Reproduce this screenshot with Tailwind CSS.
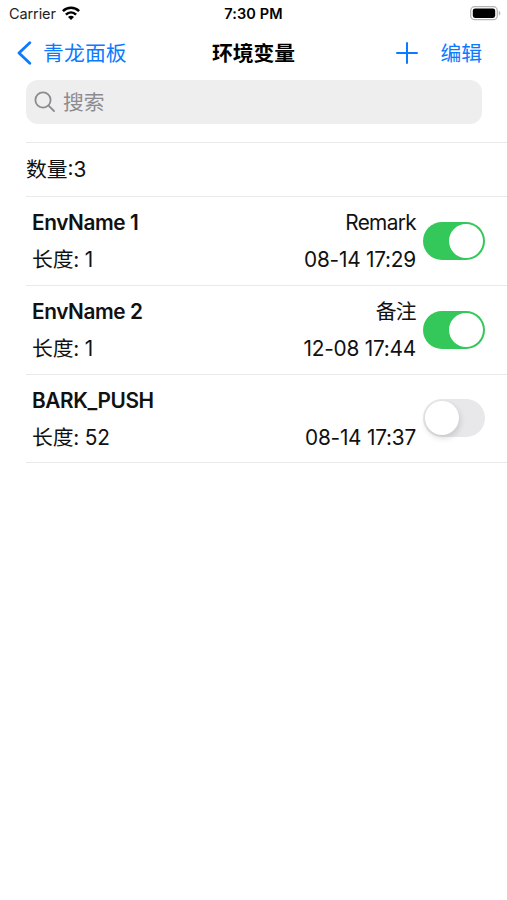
<!DOCTYPE html>
<html lang="zh-CN">
<head>
    <meta charset="UTF-8">
    <meta name="viewport" content="width=device-width, initial-scale=1.0">
    <title>环境变量</title>
    <script src="https://cdn.jsdelivr.net/npm/@tailwindcss/browser@4"></script>
</head>
<body class="bg-white text-[#111] font-['Inter','Noto_Sans_CJK_SC',sans-serif] text-[20.8px] overflow-hidden">
    <div class="w-[507px] h-[900px] flex flex-col">
        <!-- Status bar -->
        <div class="h-7 grid grid-cols-3 items-center pl-[9px] pr-[6px] text-[14.5px] leading-7">
            <div class="flex items-center gap-[6px] text-[#222]">
                <span class="tracking-[-0.1px]">Carrier</span>
                <svg class="w-[18px] h-[14px] -mt-[2px]" viewBox="0 0 18 14" fill="none" stroke="#000" stroke-width="2.5">
                    <path d="M0.9 5.2C5.4 0.7 12.6 0.7 17.1 5.2"/>
                    <path d="M3.9 8.7C6.9 5.7 11.1 5.7 14.1 8.7"/>
                    <path d="M6 11C7.8 9.2 10.2 9.2 12 11L9 14Z" fill="#000" stroke="none"/>
                </svg>
            </div>
            <div class="text-center font-semibold text-black tracking-[0.15px] pr-[3px]">7:30 PM</div>
            <div class="flex justify-end">
                <svg class="w-[31px] h-[15px] -mt-px" viewBox="0 0 31 15">
                    <rect x="0.7" y="0.7" width="26.6" height="13" rx="4" fill="#fff" stroke="#b4b4b4" stroke-width="1.3"/>
                    <rect x="2.8" y="2.5" width="22.4" height="9.4" rx="2.3"/>
                    <path d="M28.8 4.8C30.9 5.5 30.9 8.9 28.8 9.6Z" fill="#b4b4b4"/>
                </svg>
            </div>
        </div>

        <!-- Navigation bar -->
        <div class="h-[50px] grid grid-cols-3 items-center pl-[17px] pr-[25px] text-[#0a7aff] leading-[50px]">
            <div class="flex items-center gap-[11px]">
                <svg class="w-[15px] h-6 -mt-[2px]" viewBox="0 0 15 24" fill="none" stroke="currentColor" stroke-width="2.8" stroke-linecap="round" stroke-linejoin="round">
                    <path d="M12.8 1.7L2 12L12.8 22.3"/>
                </svg>
                <span class="pt-px tracking-[0.15px]">青龙面板</span>
            </div>
            <div class="text-center font-bold text-black pl-[8px] pt-px">环境变量</div>
            <div class="flex items-center justify-end gap-[22px]">
                <svg class="w-[22px] h-[22px] -mt-px" viewBox="0 0 22 22" fill="none" stroke="currentColor" stroke-width="2" stroke-linecap="round">
                    <path d="M11 1V21M1 11H21"/>
                </svg>
                <span class="pt-px">编辑</span>
            </div>
        </div>

        <!-- Search field -->
        <div class="mt-[2px] ml-[26px] w-[456px] h-11 rounded-[12px] bg-[#eeeeef] flex items-center pl-[8px] gap-[7px] text-[#8c8c90]">
            <svg class="w-[22px] h-[22px]" viewBox="0 0 22 22" fill="none" stroke="currentColor" stroke-width="1.8" stroke-linecap="round">
                <circle cx="9" cy="9" r="7.6"/>
                <path d="M14.6 14.6L20 20"/>
            </svg>
            <span class="pt-[2px]">搜索</span>
        </div>

        <!-- Variable list -->
        <div class="mt-[18px] ml-[26px] border-t border-[#e9e9ea]">
            <div class="h-[54px] border-b border-[#e9e9ea] flex items-center pt-px">数量:3</div>
            <div id="envList"></div>
        </div>
    </div>

    <script>
        const envs = [
            { name: 'EnvName 1', remark: 'Remark', length: 1, time: '08-14 17:29', enabled: true },
            { name: 'EnvName 2', remark: '备注', length: 1, time: '12-08 17:44', enabled: true },
            { name: 'BARK_PUSH', remark: '', length: 52, time: '08-14 17:37', enabled: false }
        ];

        function renderSwitch(enabled) {
            return enabled ? `
                <div class="w-[62px] h-[38px] rounded-full bg-[#34c759] p-[2px] flex justify-end">
                    <div class="w-[34px] h-[34px] rounded-full bg-white"></div>
                </div>` : `
                <div class="w-[62px] h-[38px] rounded-full bg-[#e8e8ea] p-[2px] flex">
                    <div class="w-[34px] h-[34px] rounded-full bg-white shadow-[1px_3px_6px_rgba(0,0,0,0.15)]"></div>
                </div>`;
        }

        document.getElementById('envList').innerHTML = envs.map(env => `
            <div class="h-[88.8px] border-b border-[#e9e9ea] flex items-center pl-[6px] pr-[22px] gap-[7px]">
                <div class="flex-1 grid grid-cols-2 leading-[37px] pt-[0.6px]">
                    <div class="font-semibold tracking-[-0.4px]">${env.name}</div>
                    <div class="text-right tracking-[-0.65px]">${env.remark}</div>
                    <div class="tracking-[-0.15px]">长度: ${env.length}</div>
                    <div class="text-right tracking-[-0.22px]">${env.time}</div>
                </div>
                ${renderSwitch(env.enabled)}
            </div>
        `).join('');
    </script>
</body>
</html>
